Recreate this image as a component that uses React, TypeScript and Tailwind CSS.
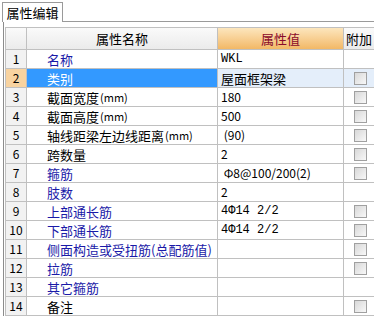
import React from "react";

type Row = { n: number; name: string; unit?: string; value: string; mono?: boolean; blue: boolean; check: boolean };

const rows: Row[] = [
  { n: 1, name: "名称", value: "WKL", mono: true, blue: true, check: false },
  { n: 2, name: "类别", value: "屋面框架梁", blue: true, check: true },
  { n: 3, name: "截面宽度", unit: "(mm)", value: "180", blue: false, check: true },
  { n: 4, name: "截面高度", unit: "(mm)", value: "500", blue: false, check: true },
  { n: 5, name: "轴线距梁左边线距离", unit: "(mm)", value: " (90)", blue: false, check: true },
  { n: 6, name: "跨数量", value: "2", blue: false, check: true },
  { n: 7, name: "箍筋", value: " Φ8@100/200(2)", blue: true, check: true },
  { n: 8, name: "肢数", value: "2", blue: true, check: false },
  { n: 9, name: "上部通长筋", value: "4Φ14 2/2", mono: true, blue: true, check: true },
  { n: 10, name: "下部通长筋", value: "4Φ14 2/2", mono: true, blue: true, check: true },
  { n: 11, name: "侧面构造或受扭筋(总配筋值)", value: "", blue: true, check: true },
  { n: 12, name: "拉筋", value: "", blue: true, check: true },
  { n: 13, name: "其它箍筋", value: "", blue: true, check: false },
  { n: 14, name: "备注", value: "", blue: false, check: true },
];

const font = "font-['SimSun','Noto_Sans_CJK_SC',sans-serif]";

function Check() {
  return (
    <div className="w-[13px] h-[13px] border border-[#a0a0a0] bg-gradient-to-br from-[#d8d8d8] to-[#f8f8f8]" />
  );
}

export default function App() {
  return (
    <div className={`w-[374px] h-[316px] bg-white overflow-hidden text-[12px] leading-none ${font}`}>
      <div className="flex h-[22px]">
        <div className="mt-[2px] ml-[2px] w-[61px] h-[20px] border border-b-0 border-[#9a9a9a] bg-white flex items-center justify-center text-[13px] text-black">
          属性编辑
        </div>
        <div className="flex-1 border-b border-[#9a9a9a]" />
      </div>
      <div className="ml-[3px] border-l border-[#8c8c8c] h-[294px] pt-[5px] pl-[1px]">
        <div className="grid grid-cols-[21px_191px_126px_40px] border-t border-l border-[#c0c0c0]">
          <div className="h-[22px] border-r border-b border-[#c0c0c0] bg-gradient-to-b from-[#fafafa] to-[#ebebeb]" />
          <div className="h-[22px] border-r border-b border-[#c0c0c0] bg-gradient-to-b from-[#fafafa] to-[#ebebeb] flex items-center justify-center text-[13px] text-black">
            属性名称
          </div>
          <div className="h-[22px] border-r border-b border-[#c0c0c0] bg-gradient-to-b from-[#fce6bd] to-[#f2b865] flex items-center justify-center text-[13px] text-[#8a0a2a]">
            属性值
          </div>
          <div className="h-[22px] border-b border-[#c0c0c0] bg-gradient-to-b from-[#fafafa] to-[#ebebeb] flex items-center pl-[2px] text-[13px] text-black">
            附加
          </div>
          {rows.map((r) => {
            const sel = r.n === 2;
            return (
              <React.Fragment key={r.n}>
                <div
                  className={`h-[19px] border-r border-b border-[#c0c0c0] flex items-center justify-center text-black ${
                    sel ? "bg-[#f8d3a0]" : "bg-[#f2f2f2]"
                  }`}
                >
                  {r.n}
                </div>
                <div
                  className={`h-[19px] border-r border-b border-[#c0c0c0] flex items-center pl-[20px] whitespace-nowrap overflow-hidden text-[13px] ${
                    sel ? "bg-[#3399ff] text-white" : r.blue ? "text-[#1a1aa8]" : "text-black"
                  }`}
                >
                  {r.name}
                  {r.unit ? <span className="text-[11px] ml-[1px]">{r.unit}</span> : null}
                </div>
                <div
                  className={`h-[19px] border-r border-b border-[#c0c0c0] flex items-center pl-[3px] whitespace-pre overflow-hidden text-black ${
                    sel ? "bg-[#e4eefa] text-[13px]" : ""
                  } ${r.mono ? "font-['Liberation_Mono',monospace]" : ""}`}
                >
                  {r.value}
                </div>
                <div className={`h-[19px] border-b border-[#c0c0c0] flex items-center pl-[10px] ${sel ? "bg-[#e4eefa]" : ""}`}>
                  {r.check ? <Check /> : null}
                </div>
              </React.Fragment>
            );
          })}
        </div>
      </div>
    </div>
  );
}
